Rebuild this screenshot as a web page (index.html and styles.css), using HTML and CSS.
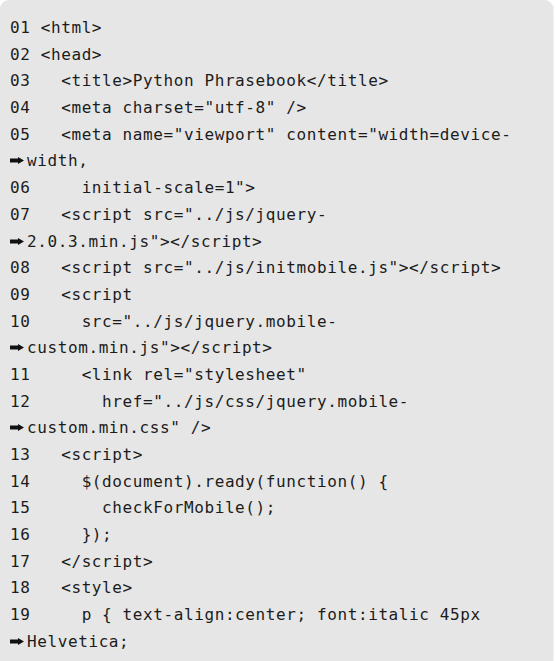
FILE: index.html
```html
<!DOCTYPE html>
<html>
<head>
<meta charset="utf-8">
<link rel="stylesheet" href="styles.css">
</head>
<body>
<div class="listing">
<div class="line">01 &lt;html&gt;</div>
<div class="line">02 &lt;head&gt;</div>
<div class="line">03   &lt;title&gt;Python Phrasebook&lt;/title&gt;</div>
<div class="line">04   &lt;meta charset="utf-8" /&gt;</div>
<div class="line">05   &lt;meta name="viewport" content="width=device-</div>
<div class="line"><svg class="arrow" viewBox="0 0 14 7"><path d="M0 1.5 H8 V0 L14 3.5 L8 7 V5.5 H0 Z"/></svg>width,</div>
<div class="line">06     initial-scale=1"&gt;</div>
<div class="line">07   &lt;script src="../js/jquery-</div>
<div class="line"><svg class="arrow" viewBox="0 0 14 7"><path d="M0 1.5 H8 V0 L14 3.5 L8 7 V5.5 H0 Z"/></svg>2.0.3.min.js"&gt;&lt;/script&gt;</div>
<div class="line">08   &lt;script src="../js/initmobile.js"&gt;&lt;/script&gt;</div>
<div class="line">09   &lt;script</div>
<div class="line">10     src="../js/jquery.mobile-</div>
<div class="line"><svg class="arrow" viewBox="0 0 14 7"><path d="M0 1.5 H8 V0 L14 3.5 L8 7 V5.5 H0 Z"/></svg>custom.min.js"&gt;&lt;/script&gt;</div>
<div class="line">11     &lt;link rel="stylesheet"</div>
<div class="line">12       href="../js/css/jquery.mobile-</div>
<div class="line"><svg class="arrow" viewBox="0 0 14 7"><path d="M0 1.5 H8 V0 L14 3.5 L8 7 V5.5 H0 Z"/></svg>custom.min.css" /&gt;</div>
<div class="line">13   &lt;script&gt;</div>
<div class="line">14     $(document).ready(function() {</div>
<div class="line">15       checkForMobile();</div>
<div class="line">16     });</div>
<div class="line">17   &lt;/script&gt;</div>
<div class="line">18   &lt;style&gt;</div>
<div class="line">19     p { text-align:center; font:italic 45px</div>
<div class="line"><svg class="arrow" viewBox="0 0 14 7"><path d="M0 1.5 H8 V0 L14 3.5 L8 7 V5.5 H0 Z"/></svg>Helvetica;</div>
</div>
</body>
</html>
```
FILE: styles.css
```css
html, body {
  margin: 0;
  padding: 0;
  background: #ffffff;
}

.listing {
  width: 553px;
  min-height: 100vh;
  box-sizing: border-box;
  background: #e6e6e6;
  border-radius: 9px 9px 0 0;
  padding: 15px 0 0 10px;
  box-shadow: 1px 0 1px rgba(0, 0, 0, 0.06);
  color: #1c1c1c;
  font-family: "DejaVu Sans Mono", monospace;
  font-size: 16px;
  letter-spacing: 0.6px;
  line-height: 26.7px;
}

.line {
  white-space: pre;
  height: 26.7px;
}

.arrow {
  display: inline-block;
  width: 14px;
  height: 7px;
  margin-right: 3px;
  vertical-align: 2px;
  fill: #111111;
}
```
